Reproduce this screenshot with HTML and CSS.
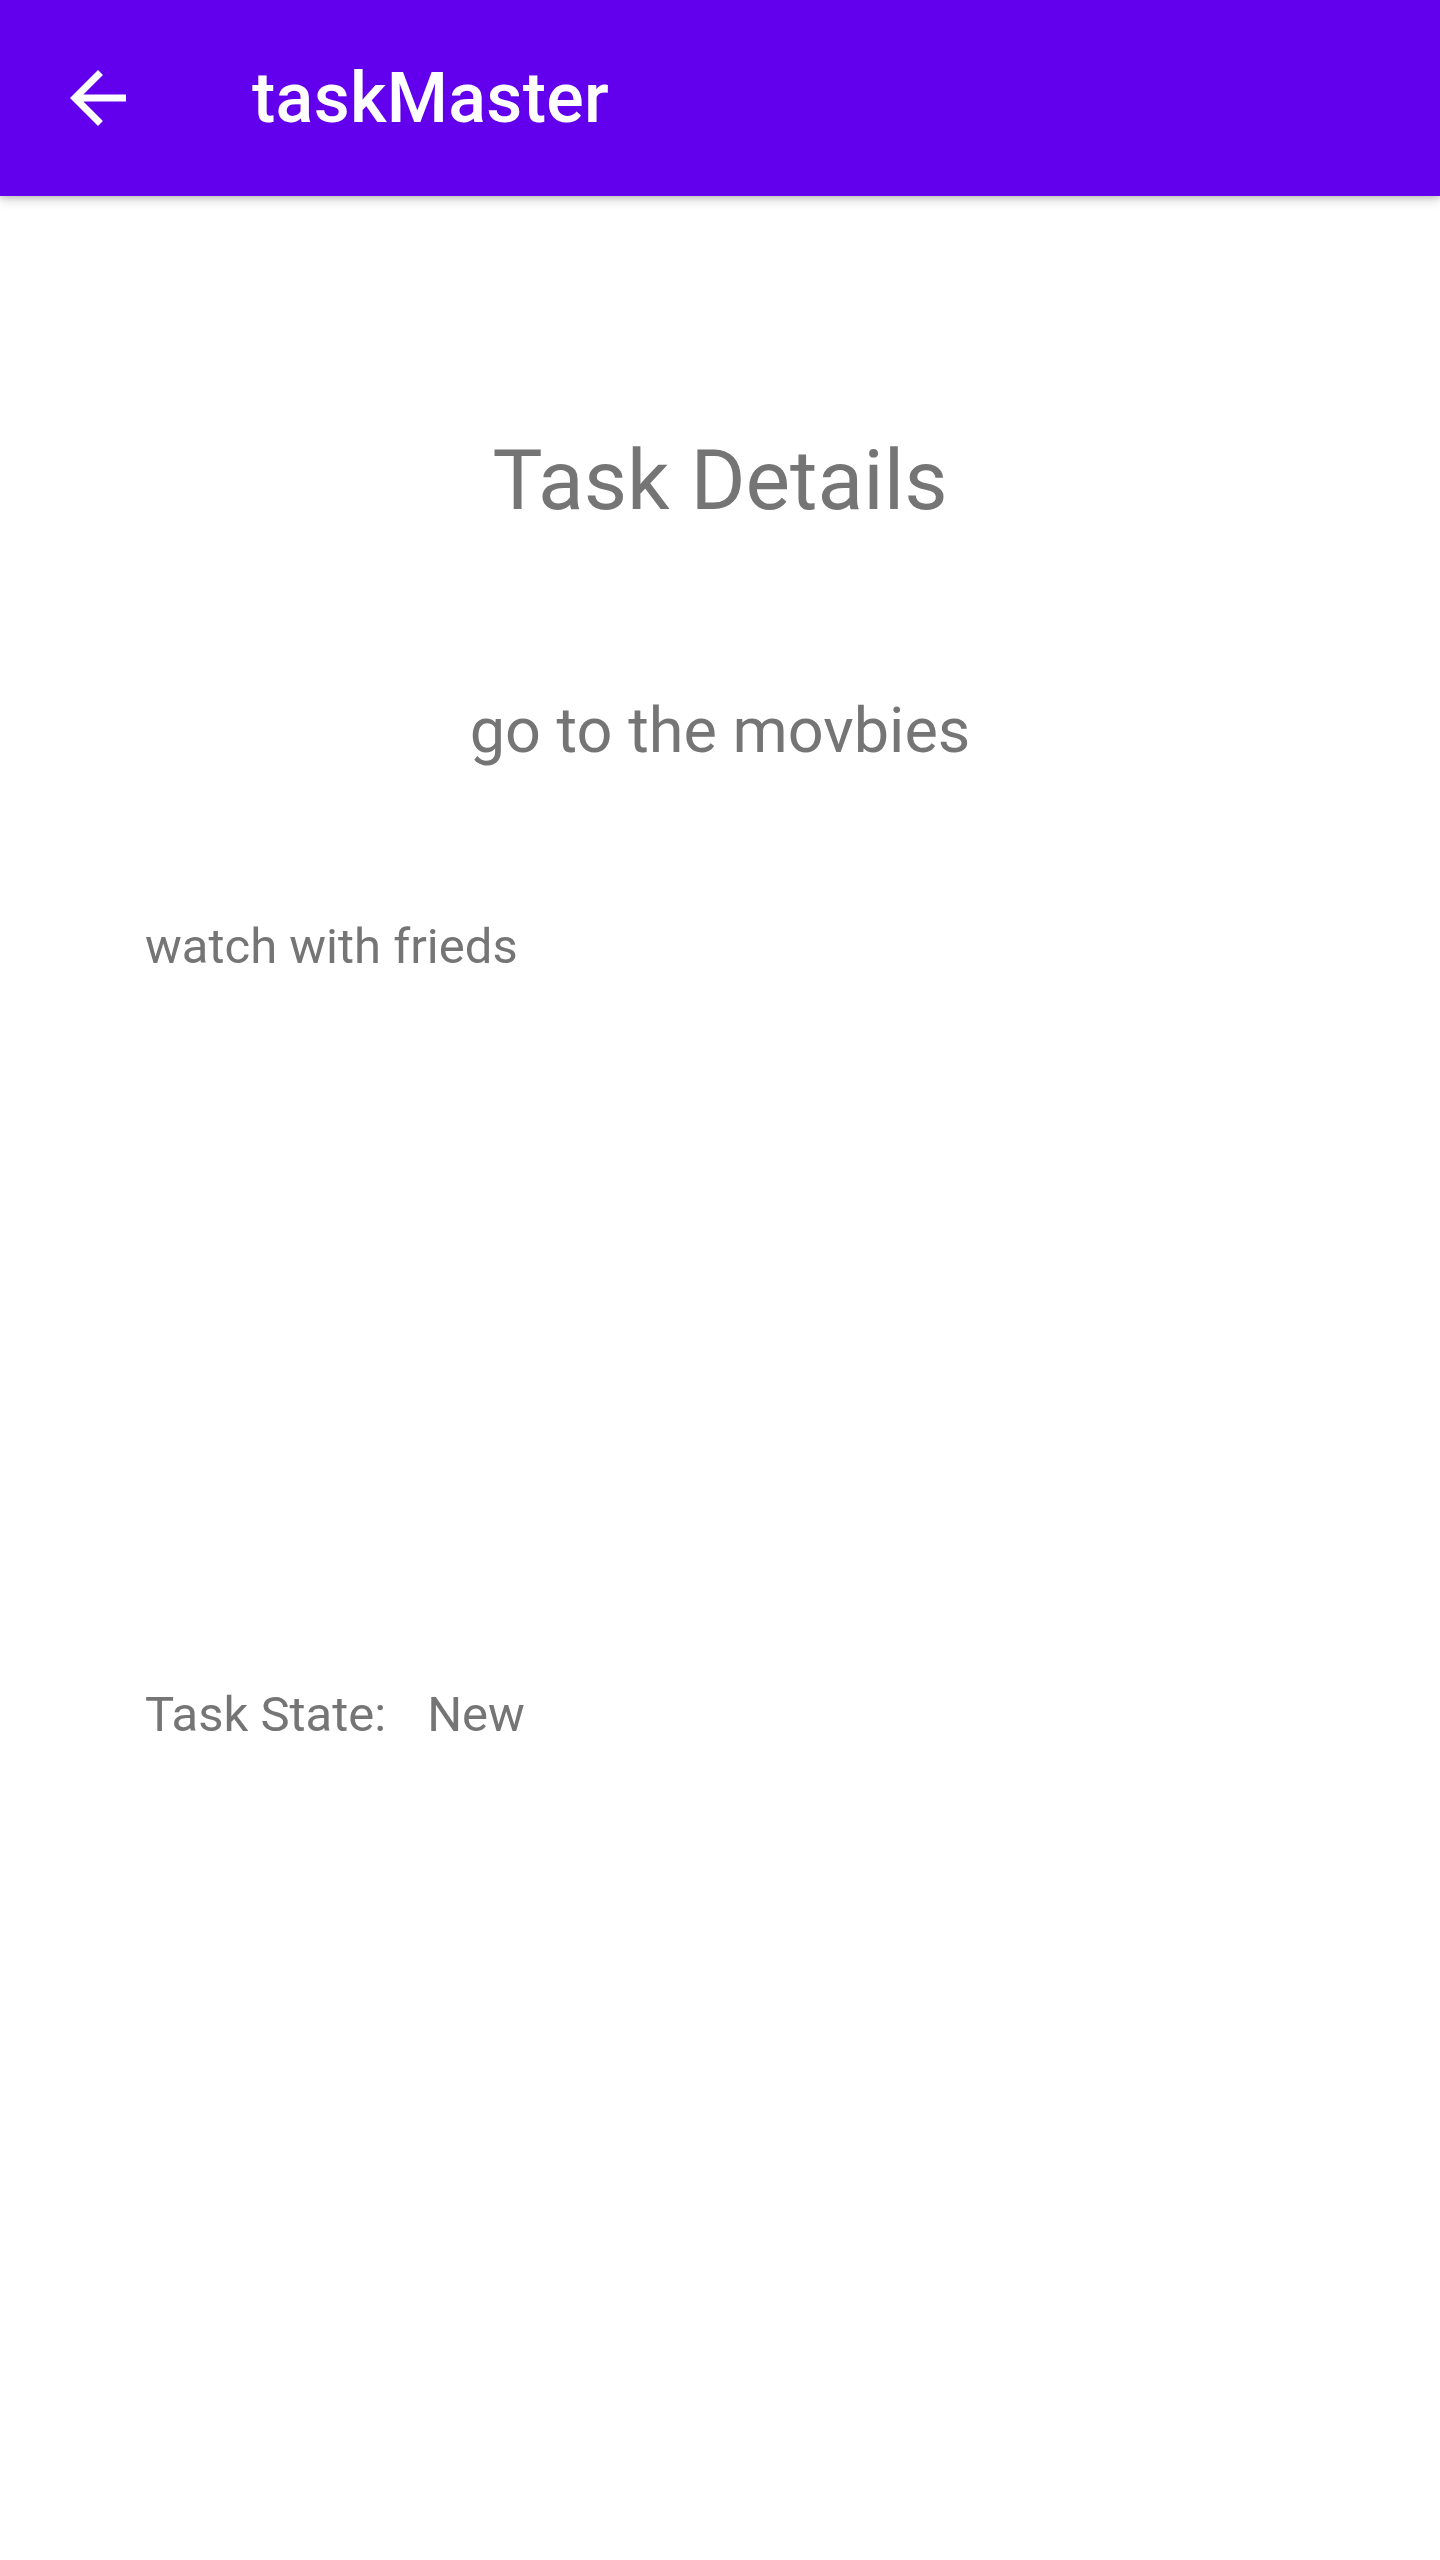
FILE: index.html
```html
<!DOCTYPE html>
<html>
<head>
<meta charset="utf-8">
<link rel="stylesheet" href="styles.css">
</head>
<body>
<header class="appbar">
  <div class="nav-btn">
    <svg class="nav-icon" viewBox="0 0 24 24" width="84" height="84"><path fill="#ffffff" d="M20 11H7.83l5.59-5.59L12 4l-8 8 8 8 1.41-1.41L7.83 13H20v-2z"/></svg>
  </div>
  <h1 class="app-title">taskMaster</h1>
</header>
<main class="content">
  <h2 class="page-title">Task Details</h2>
  <p class="task-name">go to the movbies</p>
  <p class="task-body">watch with frieds</p>
  <div class="state-row">
    <span class="state-label">Task State:</span>
    <span class="state-value">New</span>
  </div>
</main>
</body>
</html>
```

FILE: styles.css
```css
html, body {
  margin: 0;
  padding: 0;
  background: #ffffff;
}
body {
  width: 1440px;
  min-height: 2560px;
  font-family: Roboto, "Noto Sans", "Liberation Sans", sans-serif;
  color: #757575;
}
.appbar {
  height: 196px;
  background: #6200ee;
  display: flex;
  align-items: center;
  box-shadow: 0 4px 10px rgba(0, 0, 0, 0.18), 0 2px 4px rgba(0, 0, 0, 0.1);
  position: relative;
  z-index: 1;
}
.nav-btn {
  width: 196px;
  height: 196px;
  display: flex;
  align-items: center;
  padding-left: 56px;
  box-sizing: border-box;
}
.nav-icon {
  display: block;
}
.app-title {
  margin: 0 0 0 56px;
  font-size: 70px;
  font-weight: 500;
  color: #ffffff;
  line-height: 1;
  letter-spacing: 0.3px;
}
.content {
  display: flex;
  flex-direction: column;
}
.page-title {
  margin: 234px 0 0;
  font-size: 84px;
  line-height: 101px;
  font-weight: 400;
  text-align: center;
}
.task-name {
  margin: 162px 0 0;
  font-size: 63px;
  line-height: 76px;
  text-align: center;
}
.task-body {
  margin: 148px 0 0 145px;
  font-size: 49px;
  line-height: 59px;
}
.state-row {
  margin: 709px 0 0 145px;
  display: flex;
  font-size: 49px;
  line-height: 59px;
}
.state-value {
  margin-left: 41px;
}
```
